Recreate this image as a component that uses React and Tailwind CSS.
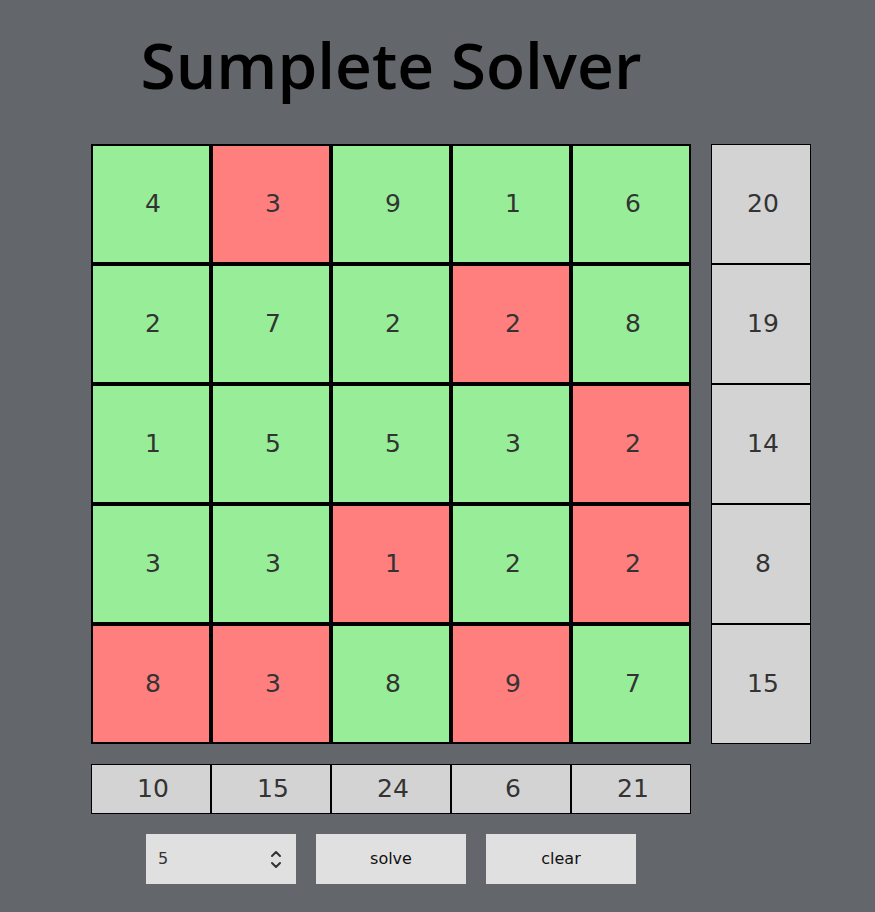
const grid = [
  [[4, 1], [3, 0], [9, 1], [1, 1], [6, 1]],
  [[2, 1], [7, 1], [2, 1], [2, 0], [8, 1]],
  [[1, 1], [5, 1], [5, 1], [3, 1], [2, 0]],
  [[3, 1], [3, 1], [1, 0], [2, 1], [2, 0]],
  [[8, 0], [3, 0], [8, 1], [9, 0], [7, 1]],
];
const rowSums = [20, 19, 14, 8, 15];
const colSums = [10, 15, 24, 6, 21];

const font = { fontFamily: '"DejaVu Sans", Verdana, sans-serif' };

export default function App() {
  return (
    <div className="min-h-screen bg-[#63666b]" style={font}>
      <div className="pl-[91px] pt-[33px]">
        <h1 className="w-[600px] text-center text-[64px] leading-[64px] h-[64px] font-semibold text-black font-['Open_Sans',sans-serif]">
          Sumplete Solver
        </h1>

        <div className="mt-[47px] flex gap-[20px]">
          <div className="grid grid-cols-5 w-[600px]">
            {grid.flat().map(([n, keep], i) => (
              <div
                key={i}
                className={
                  "h-[120px] w-[120px] border-2 border-black flex items-center justify-center pl-[4px] text-[25px] text-[#333] " +
                  (keep ? "bg-[#98ee98]" : "bg-[#ff7f7f]")
                }
              >
                {n}
              </div>
            ))}
          </div>
          <div className="flex flex-col">
            {rowSums.map((s, i) => (
              <div
                key={i}
                className="h-[120px] w-[100px] border border-black bg-[#d3d3d3] flex items-center justify-center pl-[4px] text-[25px] text-[#333]"
              >
                {s}
              </div>
            ))}
          </div>
        </div>

        <div className="mt-[20px] flex w-[600px]">
          {colSums.map((s, i) => (
            <div
              key={i}
              className="h-[50px] w-[120px] border border-black bg-[#d3d3d3] flex items-center justify-center pl-[4px] text-[25px] text-[#333]"
            >
              {s}
            </div>
          ))}
        </div>

        <div className="mt-[20px] flex w-[600px] justify-center gap-[20px]">
          <div className="h-[50px] w-[150px] bg-[#e0e0e0] flex items-center justify-between pl-[12px] pr-[14px] text-[16px] text-[#333]">
            <span>5</span>
            <svg width="12" height="19" viewBox="0 0 12 19" fill="none" stroke="#333" strokeWidth="2" strokeLinecap="round" strokeLinejoin="round">
              <path d="M2 6 L6 2 L10 6" />
              <path d="M2 13 L6 17 L10 13" />
            </svg>
          </div>
          <button className="h-[50px] w-[150px] bg-[#e0e0e0] text-[16px] text-[#111]">solve</button>
          <button className="h-[50px] w-[150px] bg-[#e0e0e0] text-[16px] text-[#111]">clear</button>
        </div>
      </div>
    </div>
  );
}
